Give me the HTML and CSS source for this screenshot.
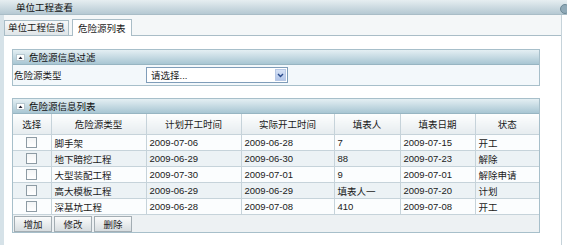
FILE: index.html
```html
<!DOCTYPE html>
<html lang="zh-CN">
<head>
    <meta charset="UTF-8">
    <title>单位工程查看</title>
    <link rel="stylesheet" href="styles.css">
</head>
<body>
    <div class="titlebar">单位工程查看<i class="tb-icon"></i></div>
    <div class="page">
        <div class="tabs">
            <div class="tab">单位工程信息</div>
            <div class="tab active">危险源列表</div>
        </div>
        <div class="content">
            <div class="panel">
                <div class="panel-hd">
                    <svg class="toggle" width="9" height="7" viewBox="0 0 9 7"><rect x="0.5" y="0.5" width="8" height="6" fill="#fff" stroke="#b7c8d0"/><path d="M2.5 5L4.5 2.5L6.5 5Z" fill="#223"/></svg>
                    危险源信息过滤
                </div>
                <div class="filter">
                    <span class="label">危险源类型</span>
                    <div class="select">
                        <span>请选择...</span>
                        <b class="arrow"><svg width="7" height="5" viewBox="0 0 7 5"><path d="M1 1L3.5 3.5L6 1" fill="none" stroke="#2a4a8a" stroke-width="1.4"/></svg></b>
                    </div>
                </div>
            </div>
            <div class="panel">
                <div class="panel-hd">
                    <svg class="toggle" width="9" height="7" viewBox="0 0 9 7"><rect x="0.5" y="0.5" width="8" height="6" fill="#fff" stroke="#b7c8d0"/><path d="M2.5 5L4.5 2.5L6.5 5Z" fill="#223"/></svg>
                    危险源信息列表
                </div>
                <table class="grid">
                    <colgroup><col class="c1"><col class="c2"><col class="c3"><col class="c4"><col class="c5"><col class="c6"><col class="c7"></colgroup>
                    <tr><th>选择</th><th>危险源类型</th><th>计划开工时间</th><th>实际开工时间</th><th>填表人</th><th>填表日期</th><th>状态</th></tr>
                    <tr><td class="ck"><span class="chk"></span></td><td>脚手架</td><td>2009-07-06</td><td>2009-06-28</td><td>7</td><td>2009-07-15</td><td>开工</td></tr>
                    <tr><td class="ck"><span class="chk"></span></td><td>地下暗挖工程</td><td>2009-06-29</td><td>2009-06-30</td><td>88</td><td>2009-07-23</td><td>解除</td></tr>
                    <tr><td class="ck"><span class="chk"></span></td><td>大型装配工程</td><td>2009-07-30</td><td>2009-07-01</td><td>9</td><td>2009-07-01</td><td>解除申请</td></tr>
                    <tr><td class="ck"><span class="chk"></span></td><td>高大模板工程</td><td>2009-06-29</td><td>2009-06-29</td><td>填表人一</td><td>2009-07-20</td><td>计划</td></tr>
                    <tr><td class="ck"><span class="chk"></span></td><td>深基坑工程</td><td>2009-06-28</td><td>2009-07-08</td><td>410</td><td>2009-07-08</td><td>开工</td></tr>
                </table>
                <div class="toolbar">
                    <button>增加</button>
                    <button>修改</button>
                    <button>删除</button>
                </div>
            </div>
        </div>
    </div>
</body>
</html>
```

FILE: styles.css
```css
body{margin:0;width:567px;height:245px;overflow:hidden;background:#fff;color:#1a1a1a;font:9.5px "Liberation Sans","Noto Sans CJK SC",sans-serif}
.titlebar{position:relative;height:15px;line-height:15px;padding-left:16px;background:linear-gradient(#e6eef1,#b5c9d3);color:#111;box-sizing:border-box;border-bottom:1px solid #a9bdc7}
.tb-icon{position:absolute;right:-3px;top:4px;width:8px;height:8px;border-radius:50%;background:#8fa9b7;border:1px solid #6c8896}
.page{width:557px;height:230px;border-left:4px solid #d6e2e8;border-right:1px solid #c6d3da;background:#fff}
.tabs{height:20px;display:flex;align-items:flex-end;border-bottom:1px solid #a9bdc7;background:#f4f7f8}
.tab{height:14px;line-height:14px;padding:0 3px;margin-right:3px;border:1px solid #a9bdc7;border-bottom:none;background:linear-gradient(#f7f8f9,#dfe5e8)}
.tab.active{height:16px;line-height:17px;padding:0 5px;margin-bottom:-1px;background:#fff}
.content{padding:13px 0 0 8px}
.panel{width:528px;box-sizing:border-box;border:1px solid #a7bfca;margin-bottom:12px}
.panel-hd{height:14px;display:flex;align-items:center;background:linear-gradient(#e4eff3,#a8c6d3);border-bottom:1px solid #97b5c2;color:#111}
.toggle{margin:0 4px 0 3px}
.filter{height:20px;display:flex;align-items:center;background:#f3f8fb}
.label{width:132px;padding-left:1px}
.select{width:142px;height:16px;box-sizing:border-box;border:1px solid #7f9db9;background:#fff;display:flex;align-items:center;justify-content:space-between;padding-left:4px}
.arrow{width:11px;height:12px;margin-right:1px;display:flex;align-items:center;justify-content:center;background:linear-gradient(#d6e2f6,#b3c6e9);border:1px solid #b8c9e6;box-sizing:border-box}
.grid{width:526px;border-collapse:collapse;table-layout:fixed}
.c1{width:38px}.c2{width:95px}.c3{width:95px}.c4{width:93px}.c5{width:66px}.c6{width:75px}.c7{width:64px}
.grid th{height:20px;padding:0;font-weight:normal;text-align:center;border:1px solid #c6d3da;border-top:none;background:linear-gradient(#fdfefe,#e6ecef)}
.grid td{height:15px;padding:0 3px;border:1px solid #c6d3da;white-space:nowrap;background:#fbfdfe}
.grid tr:nth-child(odd) td{background:#ecf2f5}
.grid th:first-child,.grid td:first-child{border-left:none}
.grid th:last-child,.grid td:last-child{border-right:none}
.grid td.ck{text-align:center;padding:0}
.chk{display:inline-block;width:9px;height:9px;vertical-align:middle;border:1px solid #8d9ba4;background:linear-gradient(#f3f5f6,#fff)}
.toolbar{height:17px;display:flex;align-items:center;background:#edf1f3;padding-left:1px}
.toolbar button{width:38px;height:16px;margin-right:2px;padding:0;font:inherit;color:#222;border:1px solid #a3adb3;background:linear-gradient(#fafbfb,#d7dde0)}
```
